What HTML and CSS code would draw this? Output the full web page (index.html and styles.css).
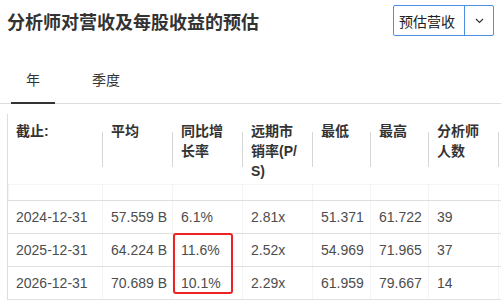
FILE: index.html
```html
<!DOCTYPE html>
<html lang="zh-CN">
<head>
<meta charset="utf-8">
<link rel="stylesheet" href="styles.css">
</head>
<body>
<div class="head">
  <h2 class="title">分析师对营收及每股收益的预估</h2>
  <div class="select">
    <span class="select-label">预估营收</span>
    <span class="select-arrow"><svg width="9" height="6" viewBox="0 0 9 6"><polyline points="1,1 4.5,4.5 8,1" fill="none" stroke="#333" stroke-width="1.2"/></svg></span>
  </div>
</div>
<div class="tabs">
  <div class="tab active">年</div>
  <div class="tab">季度</div>
</div>
<div class="table-wrap">
  <table class="est">
    <colgroup>
      <col class="c1"><col class="c2"><col class="c2"><col class="c2"><col class="c5"><col class="c5"><col class="c2"><col class="c2">
    </colgroup>
    <thead>
      <tr>
        <th class="first">截止:</th>
        <th>平均</th>
        <th>同比增长率</th>
        <th class="breakall">远期市销率(P/S)</th>
        <th>最低</th>
        <th>最高</th>
        <th>分析师人数</th>
        <th></th>
      </tr>
    </thead>
    <tbody>
      <tr class="spacer"><td></td><td></td><td></td><td></td><td></td><td></td><td></td><td></td></tr>
      <tr><td class="first">2024-12-31</td><td>57.559 B</td><td>6.1%</td><td>2.81x</td><td>51.371</td><td>61.722</td><td>39</td><td></td></tr>
      <tr><td class="first">2025-12-31</td><td>64.224 B</td><td>11.6%</td><td>2.52x</td><td>54.969</td><td>71.965</td><td>37</td><td></td></tr>
      <tr><td class="first">2026-12-31</td><td>70.689 B</td><td>10.1%</td><td>2.29x</td><td>61.959</td><td>79.667</td><td>14</td><td></td></tr>
    </tbody>
  </table>
  <div class="highlight"></div>
</div>
</body>
</html>
```
FILE: styles.css
```css
html, body {
  margin: 0;
  padding: 0;
  background: #fff;
  overflow: hidden;
}
body {
  font-family: "Liberation Sans", "Noto Sans CJK SC", sans-serif;
  color: #333;
  font-size: 14px;
}
.head {
  display: flex;
  align-items: center;
  justify-content: space-between;
  height: 41px;
  padding: 0 7px;
}
.title {
  margin: 0;
  font-size: 18px;
  font-weight: bold;
  color: #333;
  line-height: 24px;
  font-family: "Noto Sans CJK SC", sans-serif;
}
.select {
  display: flex;
  height: 31px;
  box-sizing: border-box;
  border: 1px solid #4a90e2;
  border-radius: 2px;
}
.select-label {
  display: flex;
  align-items: center;
  padding: 0 9px 0 5px;
  border-right: 1px solid #4a90e2;
  color: #222;
  font-size: 14px;
  font-family: "Noto Sans CJK SC", sans-serif;
}
.select-arrow {
  display: flex;
  align-items: center;
  justify-content: center;
  width: 28px;
}
.tabs {
  display: flex;
  height: 62px;
  padding-left: 11px;
  border-bottom: 1px solid #ddd;
  gap: 22px;
}
.tab {
  position: relative;
  padding: 28px 15px 0;
  line-height: 20px;
  font-size: 14px;
  color: #333;
  font-family: "Noto Sans CJK SC", sans-serif;
}
.tab.active::after {
  content: "";
  position: absolute;
  left: 0;
  right: 0;
  bottom: -1px;
  height: 2px;
  background: #333;
}
.table-wrap {
  position: relative;
  margin: 10px 0 0 7px;
}
.est {
  table-layout: fixed;
  width: 560px;
  border-collapse: separate;
  border-spacing: 0;
  border-left: 1px solid #ddd;
}
.c1 { width: 94px; }
.c2 { width: 70px; }
.c5 { width: 58px; }
.est th {
  position: relative;
  text-align: left;
  vertical-align: top;
  font-weight: bold;
  color: #333;
  line-height: 20px;
  height: 60px;
  padding: 7px 9px 3px;
}
.est th.breakall {
  word-break: break-all;
}
.est th::before {
  content: "";
  position: absolute;
  left: 0;
  top: 18px;
  height: 35px;
  width: 1px;
  background: #d6d6d6;
}
.est th.first::before { display: none; }
.est th.first, .est td.first { padding-left: 8px; }
.est td {
  height: 32px;
  padding: 0 9px;
  line-height: 20px;
  color: #4d4d4d;
  border-bottom: 1px solid #e0e0e0;
  box-shadow: inset 1px 0 0 #f4f4f4;
  white-space: nowrap;
}
.est td.first { box-shadow: none; }
.est tr.spacer td {
  padding: 0;
  border-top: 1px solid #f6f6f6;
  border-bottom: 1px solid #dedede;
  height: 15px;
}
.highlight {
  position: absolute;
  left: 166px;
  top: 119px;
  width: 60px;
  height: 61px;
  box-sizing: border-box;
  border: 2px solid #ee2222;
  border-radius: 3px;
}
```
